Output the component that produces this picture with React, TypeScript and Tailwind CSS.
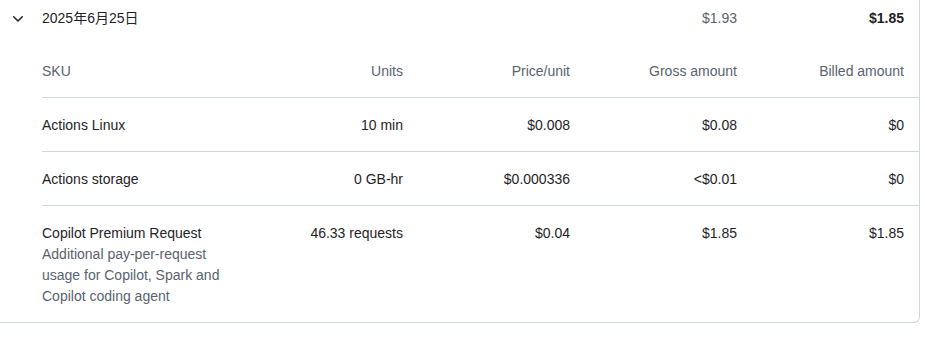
const rows = [
  { sku: 'Actions Linux', note: '', units: '10 min', price: '$0.008', gross: '$0.08', billed: '$0' },
  { sku: 'Actions storage', note: '', units: '0 GB-hr', price: '$0.000336', gross: '<$0.01', billed: '$0' },
  {
    sku: 'Copilot Premium Request',
    note: 'Additional pay-per-request usage for Copilot, Spark and Copilot coding agent',
    units: '46.33 requests',
    price: '$0.04',
    gross: '$1.85',
    billed: '$1.85',
  },
];

const cols = 'grid grid-cols-[194px_167px_167px_167px_167px] pr-[15px]';

export default function App() {
  return (
    <div
      className="w-[925px] h-[340px] bg-white text-[14px] leading-[21px] text-[#1f2328]"
      style={{ fontFamily: '"Liberation Sans", "Noto Sans CJK JP", sans-serif' }}
    >
      <div className="w-[920px] border-r border-b border-[#d1d9e0] rounded-br-md">
        {/* day summary */}
        <div className="flex items-center h-[37px]">
          <div className="w-[42px] flex justify-start pl-[10px]">
            <svg width="16" height="16" viewBox="0 0 16 16" fill="#1f2328">
              <path d="M12.78 5.22a.749.749 0 0 1 0 1.06l-4.25 4.25a.749.749 0 0 1-1.06 0L3.22 6.28a.749.749 0 1 1 1.06-1.06L8 8.94l3.72-3.72a.749.749 0 0 1 1.06 0Z" />
            </svg>
          </div>
          <div className={`${cols} flex-1`}>
            <div className="col-span-3">2025年6月25日</div>
            <div className="text-right text-[#59636e]">$1.93</div>
            <div className="text-right font-bold">$1.85</div>
          </div>
        </div>

        {/* SKU table */}
        <div className="ml-[42px]">
          <div className={`${cols} pt-[24px] pb-[15px] border-b border-[#d1d9e0] text-[#59636e]`}>
            <div>SKU</div>
            <div className="text-right">Units</div>
            <div className="text-right">Price/unit</div>
            <div className="text-right">Gross amount</div>
            <div className="text-right">Billed amount</div>
          </div>
          {rows.map((r, i) => (
            <div
              key={r.sku}
              className={`${cols} pt-[17px] pb-[15px] ${i < rows.length - 1 ? 'border-b border-[#d1d9e0]' : ''}`}
            >
              <div className="pr-[16px]">
                <div>{r.sku}</div>
                {r.note && <div className="text-[#59636e]">{r.note}</div>}
              </div>
              <div className="text-right">{r.units}</div>
              <div className="text-right">{r.price}</div>
              <div className="text-right">{r.gross}</div>
              <div className="text-right">{r.billed}</div>
            </div>
          ))}
        </div>
      </div>
    </div>
  );
}
